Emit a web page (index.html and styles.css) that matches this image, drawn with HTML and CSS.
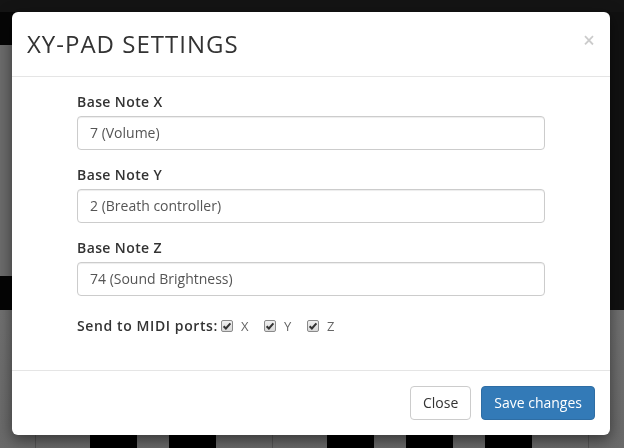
FILE: index.html
```html
<!DOCTYPE html>
<html>
<head>
<meta charset="utf-8">
<link rel="stylesheet" href="styles.css">
</head>
<body>
<div class="page">
  <div class="nav"></div>
  <div class="stage">
    <div class="left-panel">
      <div class="strip-top"></div>
      <div class="grey-area"></div>
      <div class="strip-bottom"></div>
    </div>
    <div class="right-panel"></div>
  </div>
  <div class="keys">
    <div class="white-keys">
      <div class="wk first"></div><div class="wk"></div><div class="wk"></div><div class="wk"></div><div class="wk"></div><div class="wk"></div><div class="wk"></div><div class="wk"></div><div class="wk last"></div>
    </div>
    <div class="black-keys">
      <span class="bk k1"></span><span class="bk k2"></span><span class="bk k3"></span><span class="bk k4"></span><span class="bk k5"></span>
    </div>
  </div>
</div>

<div class="modal">
  <div class="modal-header">
    <button class="close" type="button">×</button>
    <h4 class="modal-title">XY-PAD SETTINGS</h4>
  </div>
  <div class="modal-body">
    <form class="settings">
      <div class="form-group">
        <label>Base Note X</label>
        <div class="form-control">7 (Volume)</div>
      </div>
      <div class="form-group">
        <label>Base Note Y</label>
        <div class="form-control">2 (Breath controller)</div>
      </div>
      <div class="form-group">
        <label>Base Note Z</label>
        <div class="form-control">74 (Sound Brightness)</div>
      </div>
      <div class="ports">
        <span class="ports-label">Send to MIDI ports:</span>
        <span class="cb"><span class="box"><svg viewBox="0 0 12 12" width="12" height="12"><path d="M2.6 6.2 L4.9 8.5 L9.4 3.3" fill="none" stroke="#333" stroke-width="2"/></svg></span>X</span>
        <span class="cb"><span class="box"><svg viewBox="0 0 12 12" width="12" height="12"><path d="M2.6 6.2 L4.9 8.5 L9.4 3.3" fill="none" stroke="#333" stroke-width="2"/></svg></span>Y</span>
        <span class="cb"><span class="box"><svg viewBox="0 0 12 12" width="12" height="12"><path d="M2.6 6.2 L4.9 8.5 L9.4 3.3" fill="none" stroke="#333" stroke-width="2"/></svg></span>Z</span>
      </div>
    </form>
  </div>
  <div class="modal-footer">
    <button class="btn btn-default" type="button">Close</button>
    <button class="btn btn-primary" type="button">Save changes</button>
  </div>
</div>
</body>
</html>
```

FILE: styles.css
```css
* { box-sizing: border-box; }
html, body { margin: 0; padding: 0; }
body {
  width: 624px;
  height: 448px;
  overflow: hidden;
  font-family: "Open Sans", "Liberation Sans", sans-serif;
  font-size: 14px;
  line-height: 1.42857;
  color: #333;
  background: #111;
}
.page {
  display: flex;
  flex-direction: column;
  height: 448px;
}
.nav { height: 12px; background: #141414; }
.stage { height: 298px; display: flex; }
.left-panel { width: 420px; display: flex; flex-direction: column; }
.strip-top { height: 33px; background: #060606; }
.grey-area { flex: 1; background: #6c6c6c; }
.strip-bottom { height: 34px; background: #050505; }
.right-panel { flex: 1; background: #111; }
.keys {
  flex: 1;
  position: relative;
  overflow: hidden;
  background: #6e6e6e;
}
.white-keys { display: flex; height: 100%; }
.wk {
  width: 79px;
  flex: none;
  border-right: 1px solid #555;
  background: linear-gradient(#717171, #6a6a6a);
}
.wk.first { width: 36px; }
.wk.last { flex: 1; width: auto; border-right: 0; }
.black-keys { position: absolute; left: 0; right: 0; top: 0; height: 100%; }
.bk { position: absolute; top: 0; width: 47px; height: 100%; background: #000; }
.k1 { left: 90px; }
.k2 { left: 169px; }
.k3 { left: 327px; }
.k4 { left: 406px; }
.k5 { left: 485px; }

.modal {
  position: fixed;
  left: 12px;
  top: 12px;
  width: 598px;
  background: #fff;
  border-radius: 6px;
  box-shadow: 0 5px 15px rgba(0,0,0,.5);
}
.modal-header {
  padding: 15px;
  border-bottom: 1px solid #e5e5e5;
  min-height: 65px;
}
.modal-title {
  margin: 0;
  font-size: 24px;
  font-weight: 400;
  letter-spacing: 1px;
  line-height: 34px;
  color: #333;
}
.close {
  float: right;
  margin-top: 3px;
  padding: 0;
  border: 0;
  background: transparent;
  font-family: "Open Sans", "Liberation Sans", sans-serif;
  font-size: 21px;
  font-weight: 600;
  line-height: 1;
  color: #000;
  opacity: .2;
}
.modal-body { padding: 15px; }
.settings { width: 468px; margin: 0 auto; }
.form-group { margin-bottom: 15px; }
label {
  display: block;
  font-weight: 600;
  letter-spacing: 0.4px;
  margin-bottom: 4px;
  line-height: 20px;
}
.form-control {
  height: 34px;
  padding: 6px 12px;
  border: 1px solid #ccc;
  border-radius: 4px;
  color: #555;
  line-height: 20px;
  box-shadow: inset 0 1px 1px rgba(0,0,0,.075);
}
.ports {
  display: flex;
  align-items: center;
  height: 20px;
  margin-top: 20px;
  margin-bottom: 19px;
}
.ports-label { width: 144px; font-weight: 600; letter-spacing: 0.6px; }
.cb {
  display: inline-flex;
  align-items: center;
  width: 43px;
  color: #666;
  font-size: 13px;
}
.box {
  width: 12px;
  height: 12px;
  border: 1px solid #8a8a8a;
  border-radius: 2px;
  background: linear-gradient(#f0f0f0, #d8d8d8);
  margin-right: 8px;
  display: inline-flex;
  align-items: center;
  justify-content: center;
  overflow: hidden;
}
.box svg { flex: none; }
.modal-footer {
  padding: 15px;
  border-top: 1px solid #e5e5e5;
  display: flex;
  justify-content: flex-end;
  gap: 10px;
}
.btn {
  font-family: "Open Sans", "Liberation Sans", sans-serif;
  font-size: 14px;
  line-height: 20px;
  height: 34px;
  padding: 6px 12px;
  border-radius: 4px;
  border: 1px solid transparent;
}
.btn-default { background: #fff; border-color: #ccc; color: #333; }
.btn-primary { background: #337ab7; border-color: #2e6da4; color: #fff; }
```
